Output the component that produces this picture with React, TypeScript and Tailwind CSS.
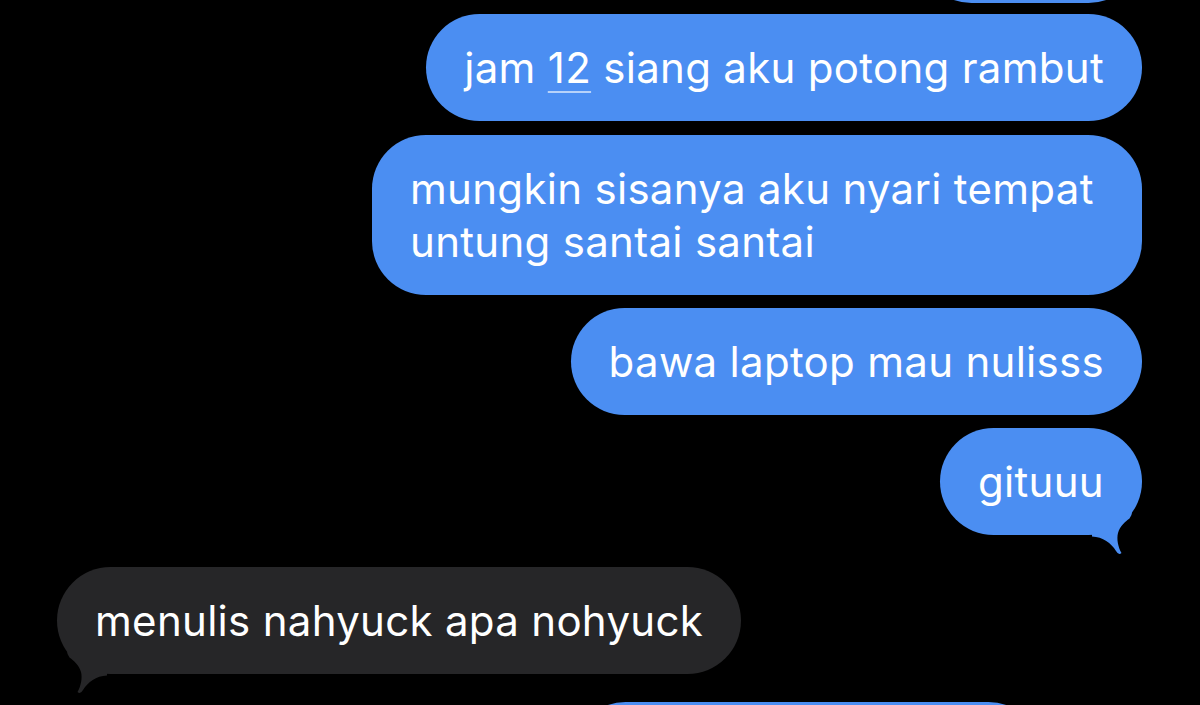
import React from 'react';

const blue = 'bg-[#4b8ef2]';
const gray = 'bg-[#262628]';

const Tail = ({ color, flip }: { color: string; flip?: boolean }) => (
  <svg
    width="50"
    height="44"
    viewBox="0 0 50 44"
    className={`absolute bottom-[-21px] ${flip ? 'left-0 -scale-x-100' : 'right-0'}`}
  >
    <path
      d="M0 0 L0 24.5 C11 25 19 31 24 39 Q26.5 43.5 29.5 41 C26 35 24.5 27 26 21 C28 14 33 10 37.5 6.5 Q40 3.5 40 0 Z"
      fill={color}
    />
  </svg>
);

const Bubble = ({
  children,
  className = '',
  tail,
}: {
  children: React.ReactNode;
  className?: string;
  tail?: 'right' | 'left';
}) => (
  <div className={`relative rounded-[54px] px-[38px] py-[27px] text-[42px] leading-[53px] tracking-[0.3px] text-white ${className}`}>
    <span className="relative z-10">{children}</span>
    {tail === 'right' && <Tail color="#4b8ef2" />}
    {tail === 'left' && <Tail color="#262628" flip />}
  </div>
);

export default function App() {
  return (
    <div
      className="h-[705px] w-[1200px] overflow-hidden bg-black"
      style={{ fontFamily: 'Inter, "Noto Sans", sans-serif' }}
    >
      <div className="flex flex-col items-end pr-[58px]">
        {/* message above, mostly scrolled off */}
        <div className={`${blue} mt-[-104px] h-[107px] w-[224px] rounded-[54px]`} />

        <Bubble className={`${blue} mt-[11px]`}>
          jam{' '}
          <span className="underline decoration-white/60 decoration-[1.5px] underline-offset-[8px]">12</span>{' '}
          siang aku potong rambut
        </Bubble>

        <Bubble className={`${blue} mt-[14px] max-w-[770px]`}>
          mungkin sisanya aku nyari tempat untung santai santai
        </Bubble>

        <Bubble className={`${blue} mt-[13px]`}>bawa laptop mau nulisss</Bubble>

        <Bubble className={`${blue} mt-[13px]`} tail="right">
          gituuu
        </Bubble>

        <Bubble className={`${gray} mt-[32px] self-start ml-[57px]`} tail="left">
          menulis nahyuck apa nohyuck
        </Bubble>

        {/* next message, cut at the bottom edge */}
        <div className={`${blue} mt-[28px] mr-[100px] h-[107px] w-[470px] rounded-[54px]`} />
      </div>
    </div>
  );
}
